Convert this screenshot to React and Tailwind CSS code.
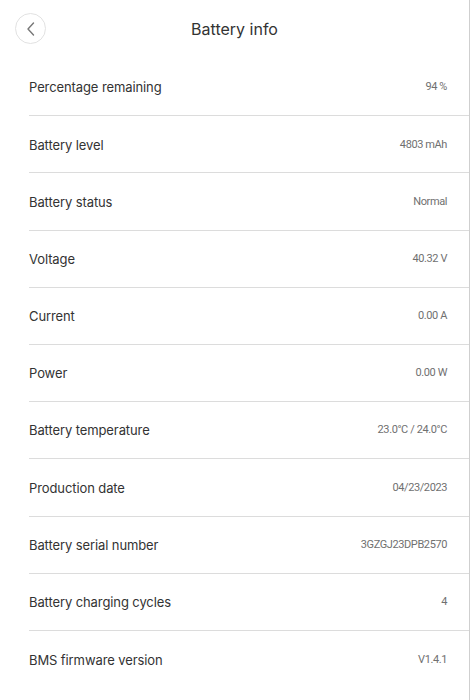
import React from 'react';

const rows = [
  { label: 'Percentage remaining', value: '94 %' },
  { label: 'Battery level', value: '4803 mAh' },
  { label: 'Battery status', value: 'Normal' },
  { label: 'Voltage', value: '40.32 V' },
  { label: 'Current', value: '0.00 A' },
  { label: 'Power', value: '0.00 W' },
  { label: 'Battery temperature', value: '23.0°C / 24.0°C' },
  { label: 'Production date', value: '04/23/2023' },
  { label: 'Battery serial number', value: '3GZGJ23DPB2570' },
  { label: 'Battery charging cycles', value: '4' },
  { label: 'BMS firmware version', value: 'V1.4.1' },
];

function InfoRow({ label, value, last }) {
  return (
    <div className={`ml-[29px] h-[57.2px] flex items-center justify-between pr-[22px] ${last ? '' : 'border-b border-[#dcdcdc]'}`}>
      <span className="mt-[2px] text-[13px] tracking-[-0.1px] text-[#333] font-['Inter','Liberation_Sans',sans-serif]">{label}</span>
      <span className="mt-[1px] text-[11px] tracking-[-0.4px] text-[#707070] font-['Roboto','Liberation_Sans',sans-serif]">{value}</span>
    </div>
  );
}

export default function App() {
  return (
    <div className="w-[470px] h-[700px] bg-white border-r border-[#cfcfcf] overflow-hidden">
      {/* Header */}
      <header className="relative h-[59px] flex items-center justify-center">
        <button className="absolute left-[15px] top-[13px] w-[31px] h-[31px] rounded-full border border-[#e2e2e2] flex items-center justify-center">
          <svg width="12" height="16" viewBox="0 0 12 16" fill="none">
            <path d="M8.5 2L3 8L8.5 14" stroke="#777" strokeWidth="1.4" strokeLinecap="round" strokeLinejoin="round" />
          </svg>
        </button>
        <h1 className="text-[16px] text-[#333] font-['Inter','Liberation_Sans',sans-serif] -mt-[1px]">Battery info</h1>
      </header>

      {/* Rows */}
      <div>
        {rows.map((row, i) => (
          <InfoRow key={row.label} label={row.label} value={row.value} last={i === rows.length - 1} />
        ))}
      </div>
    </div>
  );
}
